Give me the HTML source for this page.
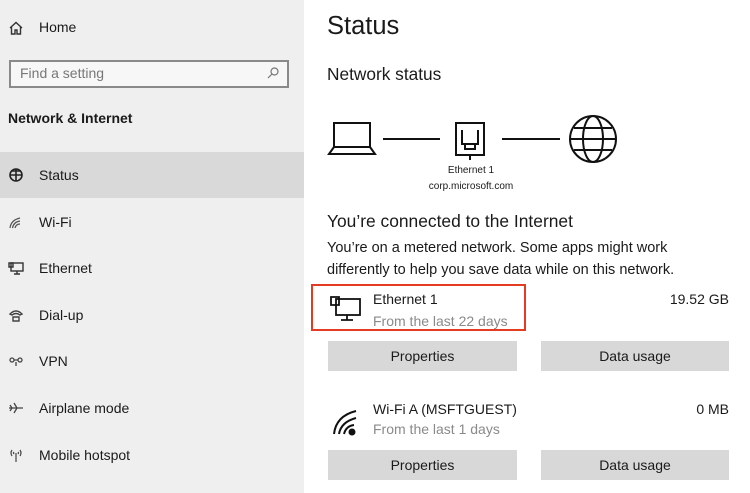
<!DOCTYPE html>
<html><head><meta charset="utf-8"><style>
*{margin:0;padding:0;box-sizing:border-box}
body{width:750px;height:493px;overflow:hidden;font-family:"Liberation Sans",sans-serif;background:#fff;position:relative;color:#1a1a1a}
.side{position:absolute;left:0;top:0;width:304px;height:493px;background:#efefef}
.a{position:absolute;white-space:nowrap}
.nav{position:absolute;left:39px;font-size:14px;line-height:16px}
.ic{position:absolute;left:8px}
.btn{position:absolute;height:30px;background:#d8d8d8;font-size:14px;text-align:center;line-height:30px}
</style></head><body>
<div class="side"></div>
<div class="a" style="left:0;top:152px;width:304px;height:46px;background:#d9d9d9"></div>
<svg class="ic" style="top:20px" width="16" height="16" viewBox="0 0 16 16" fill="none" stroke="#333" stroke-width="1.4"><path d="M2 8L8 2.5L14 8M3.5 7v7h3.5v-4h2v4h3.5V7"/></svg>
<div class="nav" style="top:19px">Home</div>
<div class="a" style="left:9px;top:60px;width:280px;height:28px;border:2px solid #8a8a8a;background:#f7f7f7"></div>
<div class="a" style="left:20px;top:65px;font-size:14px;color:#777">Find a setting</div>
<svg class="a" style="left:266px;top:66px" width="14" height="14" viewBox="0 0 14 14" fill="none" stroke="#777" stroke-width="1.2"><circle cx="8.5" cy="5.5" r="3.5"/><path d="M6 8L2 12"/></svg>
<div class="a" style="left:8px;top:110px;font-size:14px;font-weight:bold">Network &amp; Internet</div>
<svg class="ic" style="top:167px" width="16" height="16" viewBox="0 0 16 16" fill="none" stroke="#222" stroke-width="1.6"><circle cx="8" cy="8" r="6"/><path d="M2 8h12M8 2v12M3 4h10"/></svg>
<div class="nav" style="top:167px">Status</div>
<svg class="ic" style="top:214px" width="16" height="16" viewBox="0 0 16 16" fill="none" stroke="#555" stroke-width="1.2"><path d="M2 14Q3 6 12 4M4.5 14Q5.5 8 12 7M7 14Q8 10 12 10"/></svg>
<div class="nav" style="top:214px">Wi-Fi</div>
<svg class="ic" style="top:260px" width="16" height="16" viewBox="0 0 16 16" fill="none" stroke="#333" stroke-width="1.4"><rect x="3" y="3" width="12" height="8"/><path d="M6 14h6M9 11v3M1 3h4v4H1z"/></svg>
<div class="nav" style="top:260px">Ethernet</div>
<svg class="ic" style="top:307px" width="16" height="16" viewBox="0 0 16 16" fill="none" stroke="#444" stroke-width="1.4"><path d="M2 7Q8 1 14 7L12 8Q8 5 4 8Z"/><path d="M5 10h6v4H5z"/></svg>
<div class="nav" style="top:307px">Dial-up</div>
<svg class="ic" style="top:353px" width="16" height="16" viewBox="0 0 16 16" fill="none" stroke="#444" stroke-width="1.3"><circle cx="4" cy="7" r="2"/><circle cx="12" cy="7" r="2"/><path d="M6 7h4M8 9v4"/></svg>
<div class="nav" style="top:353px">VPN</div>
<svg class="ic" style="top:400px" width="16" height="16" viewBox="0 0 16 16" fill="none" stroke="#444" stroke-width="1.3"><path d="M1 8h14M6 3l3 5-3 5M2 5l2 3-2 3"/></svg>
<div class="nav" style="top:400px">Airplane mode</div>
<svg class="ic" style="top:447px" width="16" height="16" viewBox="0 0 16 16" fill="none" stroke="#444" stroke-width="1.2"><path d="M8 6v9M4 3Q2 6 4 9M12 3Q14 6 12 9M6 5Q5 6 6 7M10 5Q11 6 10 7"/></svg>
<div class="nav" style="top:447px">Mobile hotspot</div>

<div class="a" style="left:327px;top:12px;font-size:25.5px">Status</div>
<div class="a" style="left:327px;top:64px;font-size:17.3px">Network status</div>
<svg class="a" style="left:325px;top:112px" width="300" height="56" viewBox="325 112 300 56" fill="none" stroke="#111" stroke-width="2">
<rect x="334" y="123" width="36" height="24"/><path d="M334 147L329 154h46l-5-7"/>
<path d="M383 139h57M502 139h58"/>
<rect x="456" y="123" width="28" height="32"/><path d="M462 130v14h16v-14M465 144v5h10v-5M470 155v5"/>
<circle cx="593" cy="139" r="23"/><ellipse cx="593" cy="139" rx="10" ry="23"/><path d="M570 139h46M574 128h38M574 150h38"/>
</svg>
<div class="a" style="left:441px;top:165px;font-size:10px;width:60px;text-align:center">Ethernet 1</div>
<div class="a" style="left:411px;top:181px;font-size:10px;width:120px;text-align:center">corp.microsoft.com</div>
<div class="a" style="left:327px;top:211px;font-size:17.4px">You’re connected to the Internet</div>
<div class="a" style="left:327px;top:237px;font-size:14.5px;line-height:22px">You’re on a metered network. Some apps might work<br>differently to help you save data while on this network.</div>
<div class="a" style="left:311px;top:284px;width:215px;height:47px;border:2px solid #e53b22"></div>
<svg class="a" style="left:329px;top:294px" width="34" height="30" viewBox="0 0 34 30" fill="none" stroke="#111" stroke-width="1.8"><rect x="7" y="5" width="24" height="16"/><path d="M2 3h8v8H2zM12 26h12M18 21v5"/></svg>
<div class="a" style="left:373px;top:291px;font-size:14px">Ethernet 1</div>
<div class="a" style="left:373px;top:313px;font-size:14px;color:#8a8a8a">From the last 22 days</div>
<div class="a" style="right:21px;top:291px;font-size:14px">19.52 GB</div>
<div class="btn" style="left:328px;top:341px;width:189px">Properties</div>
<div class="btn" style="left:541px;top:341px;width:188px">Data usage</div>
<svg class="a" style="left:332px;top:408px" width="28" height="28" viewBox="0 0 28 28" fill="none" stroke="#111" stroke-width="2"><path d="M2 26Q4 8 24 3M7 26Q9 14 24 10M12 26Q14 18 22 17"/><circle cx="20" cy="24" r="2.5" fill="#111"/></svg>
<div class="a" style="left:373px;top:401px;font-size:14px">Wi-Fi A (MSFTGUEST)</div>
<div class="a" style="left:373px;top:421px;font-size:14px;color:#8a8a8a">From the last 1 days</div>
<div class="a" style="right:21px;top:401px;font-size:14px">0 MB</div>
<div class="btn" style="left:328px;top:450px;width:189px">Properties</div>
<div class="btn" style="left:541px;top:450px;width:188px">Data usage</div>
</body></html>
